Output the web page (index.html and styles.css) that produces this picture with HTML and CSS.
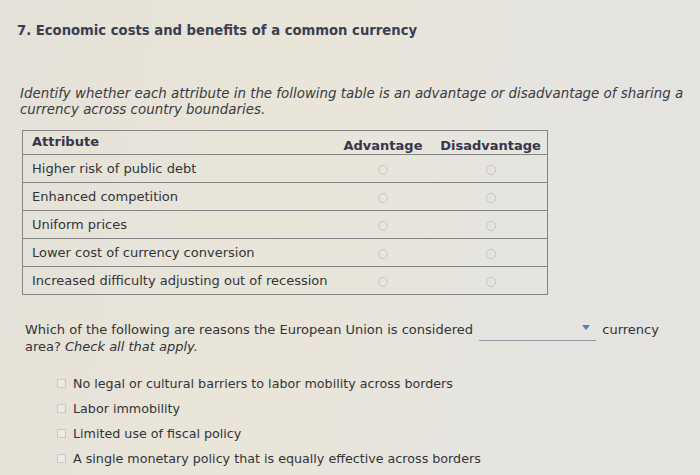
FILE: index.html
```html
<!DOCTYPE html>
<html>
<head>
<meta charset="utf-8">
<link rel="stylesheet" href="styles.css">
</head>
<body>
<div class="page">
  <h2 class="title">7. Economic costs and benefits of a common currency</h2>
  <p class="intro">Identify whether each attribute in the following table is an advantage or disadvantage of sharing a currency across country boundaries.</p>
  <table class="grid">
    <thead>
      <tr><th class="attr">Attribute</th><th class="opt adv">Advantage</th><th class="opt">Disadvantage</th></tr>
    </thead>
    <tbody>
      <tr><td class="attr">Higher risk of public debt</td><td class="opt"><span class="radio"></span></td><td class="opt"><span class="radio"></span></td></tr>
      <tr><td class="attr">Enhanced competition</td><td class="opt"><span class="radio"></span></td><td class="opt"><span class="radio"></span></td></tr>
      <tr><td class="attr">Uniform prices</td><td class="opt"><span class="radio"></span></td><td class="opt"><span class="radio"></span></td></tr>
      <tr><td class="attr">Lower cost of currency conversion</td><td class="opt"><span class="radio"></span></td><td class="opt"><span class="radio"></span></td></tr>
      <tr><td class="attr">Increased difficulty adjusting out of recession</td><td class="opt"><span class="radio"></span></td><td class="opt"><span class="radio"></span></td></tr>
    </tbody>
  </table>
  <p class="question"><span>Which of the following are reasons the European Union is considered</span> <span class="select"><span class="caret"></span></span> <span>currency</span> <span>area?</span> <em>Check all that apply.</em></p>
  <ul class="checks">
    <li><span class="box"></span>No legal or cultural barriers to labor mobility across borders</li>
    <li><span class="box"></span>Labor immobility</li>
    <li><span class="box"></span>Limited use of fiscal policy</li>
    <li><span class="box"></span>A single monetary policy that is equally effective across borders</li>
  </ul>
</div>
</body>
</html>
```
FILE: styles.css
```css
html, body {
  margin: 0;
  padding: 0;
}
body {
  background: linear-gradient(100deg, #e4e1d9 0%, #e9e5d8 40%, #e6e4df 70%, #e4e3e0 100%);
  width: 700px;
  height: 475px;
  overflow: hidden;
  font-family: "DejaVu Sans", Verdana, sans-serif;
  color: #333338;
}
.page {
  padding: 22px 0 0 17px;
}
.title {
  margin: 0;
  font-size: 13.2px;
  font-weight: bold;
  color: #3a3e52;
  line-height: 18px;
}
.intro {
  margin: 46px 0 0 3px;
  width: 670px;
  font-size: 13.4px;
  font-style: italic;
  line-height: 16px;
  color: #3a3a40;
}
.grid {
  margin: 12px 0 0 5px;
  width: 526px;
  border-collapse: collapse;
  border: 1px solid #848486;
  font-size: 13px;
}
.grid th, .grid td {
  padding: 0;
  border-top: 1px solid #848486;
}
.grid th {
  height: 24px;
  box-sizing: border-box;
  font-weight: bold;
  color: #35364a;
}
.grid td {
  height: 27px;
}
.grid .attr {
  text-align: left;
  padding-left: 9px;
  width: 300px;
}
.grid th.opt {
  text-align: center;
  padding-top: 5px;
}
.grid th.attr {
  padding-bottom: 3px;
}
.grid td.opt {
  text-align: center;
}
.grid th.adv {
  width: 102px;
}
.radio {
  display: inline-block;
  width: 8px;
  height: 8px;
  border: 1px solid #c6c6c2;
  border-radius: 50%;
  vertical-align: middle;
}
.question {
  margin: 26px 0 0 8px;
  width: 665px;
  font-size: 13px;
  line-height: 17px;
  color: #333338;
}
.select {
  display: inline-block;
  position: relative;
  width: 117px;
  height: 0;
  vertical-align: baseline;
  margin: 0 2px;
}
.select::after {
  content: "";
  position: absolute;
  left: 0;
  right: 0;
  top: 6px;
  border-bottom: 1px solid #8e9aa8;
}
.caret {
  position: absolute;
  right: 6px;
  top: -9px;
  width: 0;
  height: 0;
  border-left: 4px solid transparent;
  border-right: 4px solid transparent;
  border-top: 5px solid #4d7fc4;
}
.checks {
  list-style: none;
  margin: 16px 0 0 40px;
  padding: 0;
  font-size: 12.7px;
  color: #333338;
}
.checks li {
  display: flex;
  align-items: center;
  gap: 7px;
  height: 25px;
}
.box {
  width: 7px;
  height: 7px;
  border: 1px solid #c8c8c4;
  background: #ebebe8;
}
```
